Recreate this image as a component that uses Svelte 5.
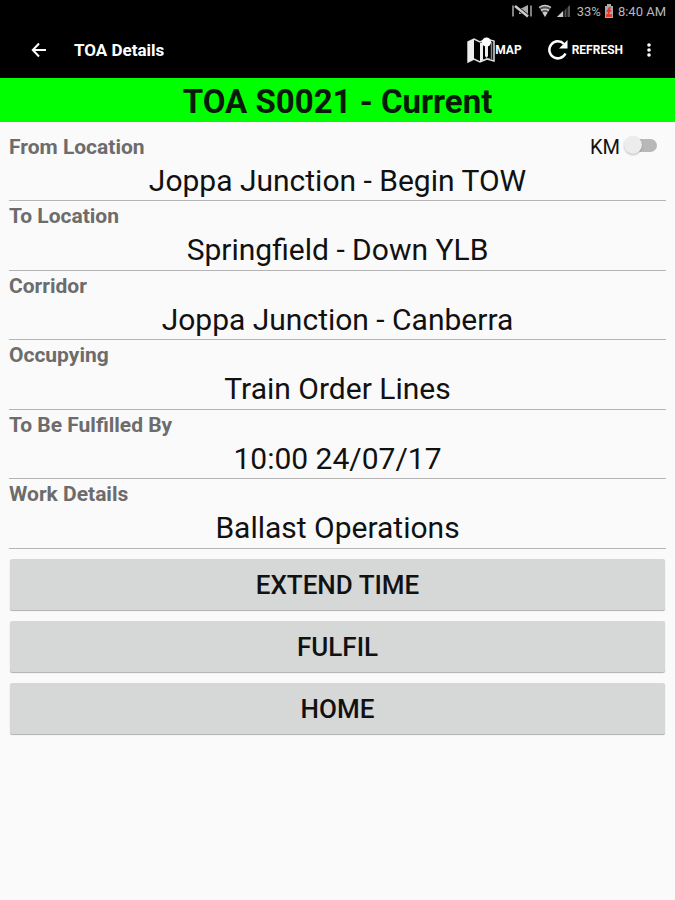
<script lang="ts">
    let showKm = $state(false);

    const fields = [
        { id: "from", label: "From Location", value: "Joppa Junction - Begin TOW" },
        { id: "to", label: "To Location", value: "Springfield - Down YLB" },
        { id: "corridor", label: "Corridor", value: "Joppa Junction - Canberra" },
        { id: "occupying", label: "Occupying", value: "Train Order Lines" },
        { id: "fulfil-by", label: "To Be Fulfilled By", value: "10:00 24/07/17" },
        { id: "work", label: "Work Details", value: "Ballast Operations" },
    ];
    const actions = ["EXTEND TIME", "FULFIL", "HOME"];
</script>

<div class="screen">
    <div class="status-bar">
        <svg class="mute" width="22" height="14" viewBox="0 0 22 14" fill="none" stroke="#aaa" stroke-width="1.5">
            <path d="M2 1.500v11M20 1.500v11" />
            <path d="M8 4h3l6-3v12l-6-3H8z" fill="#aaa" stroke="none" />
            <path d="M4 2L17 12.500" stroke="#000" stroke-width="4" />
            <path d="M4 2L17 12.500" stroke="#ccc" stroke-width="2.500" />
        </svg>
        <svg class="wifi" width="14" height="14" viewBox="0 0 14 14">
            <path d="M1 3.5Q7-.5 13 3.5L7 13z" fill="#555" />
            <path d="M1 3.5Q7-.5 13 3.5M3 6.5Q7 4 11 6.5" fill="none" stroke="#ccc" stroke-width="1.5" />
            <path d="M4.5 8.5Q7 7 9.5 8.5L7 13z" fill="#ccc" />
        </svg>
        <svg class="signal" width="15" height="14" viewBox="0 0 15 14">
            <path d="M1 13L14 1v12z" fill="#555" />
            <path d="M1 13l6-6v6z" fill="#ccc" />
            <path d="M8 1v12M11 1v12" stroke="#000" />
        </svg>
        <span class="percent">33%</span>
        <svg class="battery" width="10" height="14" viewBox="0 0 10 14">
            <path d="M3 0h4v2h2v12H1V2h2z" fill="#aaa" />
            <path d="M2 10h6v3H2z" fill="#e33b28" />
            <path d="M5 3L2 8h2l-1 4 5-6H6l1-3z" fill="#e33b28" />
        </svg>
        <span>8:40 AM</span>
    </div>

    <header class="toolbar">
        <button class="back" aria-label="Back">
            <svg width="16" height="16" viewBox="0 0 16 16" fill="none" stroke="#fff" stroke-width="2">
                <path d="M15 8H2M8 1.5L1.8 8 8 14.5" />
            </svg>
        </button>
        <h1>TOA Details</h1>
        <button class="map">
            <svg width="28" height="26" viewBox="0 0 28 26">
                <path d="M1 5l6-3 6 3 6-3 8 2v20l-7-2-7 3-6-3-6 3z" fill="#000" stroke="#ddd" stroke-width="1.500" />
                <path d="M1 5l6-3v20l-6 3zM13 6l3-1v18l-3 2z" fill="#eee" />
                <path d="M24.500 5v18" stroke="#888" stroke-width="1.500" />
                <path d="M16 0h7v22h-7z" fill="#000" />
                <path d="M18 8h3v11l-1.500 2-1.500-2z" fill="#eee" />
                <path d="M16 23l4-1.500 3 .5" fill="none" stroke="#ccc" />
                <circle cx="19.500" cy="5" r="4.500" fill="#fff" />
            </svg>
            <span>MAP</span>
        </button>
        <button class="refresh">
            <svg width="22" height="22" viewBox="0 0 22 22">
                <path d="M18.500 14.500A8.500 8.500 0 1 1 17 5" fill="none" stroke="#fff" stroke-width="2.500" />
                <path d="M20.500 1v8.500H12z" fill="#fff" />
            </svg>
            <span>REFRESH</span>
        </button>
        <button class="more" aria-label="More options">
            <svg width="4" height="16" viewBox="0 0 4 16" fill="#fff">
                <circle cx="2" cy="3" r="1.800" />
                <circle cx="2" cy="8" r="1.800" />
                <circle cx="2" cy="13" r="1.800" />
            </svg>
        </button>
    </header>

    <h2 class="banner">TOA S0021 - Current</h2>

    <main>
        {#each fields as field, i}
            <section class="field">
                <div class="field-head">
                    <h3 id={field.id}>{field.label}</h3>
                    {#if i === 0}
                        <label class="km">
                            <span>KM</span>
                            <input type="checkbox" role="switch" bind:checked={showKm} />
                        </label>
                    {/if}
                </div>
                <p aria-labelledby={field.id}>{field.value}</p>
            </section>
        {/each}

        <div class="actions">
            {#each actions as action}
                <button>{action}</button>
            {/each}
        </div>
    </main>
</div>

<style>
    :global(body) {
        margin: 0;
        background-color: #fafafa;
    }
    .screen {
        min-height: 100vh;
        background-color: #fafafa;
        color: #111;
        font-family: Roboto, "Noto Sans", sans-serif;
    }
    h1, h2, h3, p {
        margin: 0;
    }
    button {
        font-family: inherit;
        border: 0;
        cursor: pointer;
    }
    svg {
        display: block;
        flex: none;
    }
    .status-bar {
        display: flex;
        align-items: center;
        justify-content: flex-end;
        height: 22px;
        padding: 0 9px 2px 0;
        background-color: #000;
        color: #b8b8b8;
        font-size: 13px;
    }
    .wifi {
        margin-left: 5px;
    }
    .signal {
        margin-left: 4px;
    }
    .percent {
        margin-left: 6px;
    }
    .battery {
        margin: 0 4px 0 3px;
    }
    .toolbar {
        display: flex;
        align-items: center;
        height: 52px;
        padding: 0 16px 2px 0;
        background-color: #000;
        color: #fff;
    }
    .toolbar button {
        display: flex;
        align-items: center;
        height: 48px;
        padding: 0;
        background: none;
        color: #fff;
        font-size: 12px;
        font-weight: 700;
    }
    .toolbar .back {
        width: 74px;
        padding-left: 31px;
    }
    h1 {
        flex: 1;
        font-size: 17px;
        font-weight: 700;
    }
    .toolbar .refresh {
        gap: 3px;
        margin-left: 25px;
    }
    .toolbar .more {
        justify-content: center;
        width: 20px;
        margin-left: 16px;
    }
    .banner {
        background-color: #00ff00;
        color: #0a1a0a;
        font-size: 33px;
        font-weight: 700;
        line-height: 48px;
        height: 44px;
        text-align: center;
    }
    main {
        padding: 10px 9px;
    }
    .field {
        padding-bottom: 1px;
        border-bottom: 1px solid #b4b4b4;
    }
    .field-head {
        display: flex;
        align-items: center;
        justify-content: space-between;
        height: 30px;
    }
    h3 {
        color: #6c6c6c;
        font-size: 21px;
        font-weight: 700;
    }
    .km {
        display: flex;
        align-items: center;
        gap: 4px;
        padding-right: 9px;
        font-size: 20px;
    }
    .km input {
        appearance: none;
        position: relative;
        width: 33px;
        height: 18px;
        margin: 0 0 4px;
    }
    .km input::before {
        content: "";
        position: absolute;
        top: 3px;
        right: 0;
        width: 28px;
        height: 13px;
        border-radius: 7px;
        background-color: #b8b8b8;
    }
    .km input::after {
        content: "";
        position: absolute;
        top: 0;
        left: 0;
        width: 18px;
        height: 18px;
        border-radius: 50%;
        background-color: #ececec;
        box-shadow: 0 1px 2px rgba(0, 0, 0, 0.25);
    }
    .km input:checked::after {
        left: 15px;
    }
    .field p {
        font-size: 30px;
        line-height: 38px;
        text-align: center;
    }
    .field:nth-child(odd) p {
        line-height: 37px;
    }
    .actions {
        display: flex;
        flex-direction: column;
        gap: 11px;
        padding: 10px 1px;
    }
    .actions button {
        height: 51px;
        border-radius: 2px;
        background-color: #d6d7d7;
        box-shadow: 0 1px 1px rgba(0, 0, 0, 0.3);
        color: #111;
        font-size: 26px;
        font-weight: 500;
    }
</style>
